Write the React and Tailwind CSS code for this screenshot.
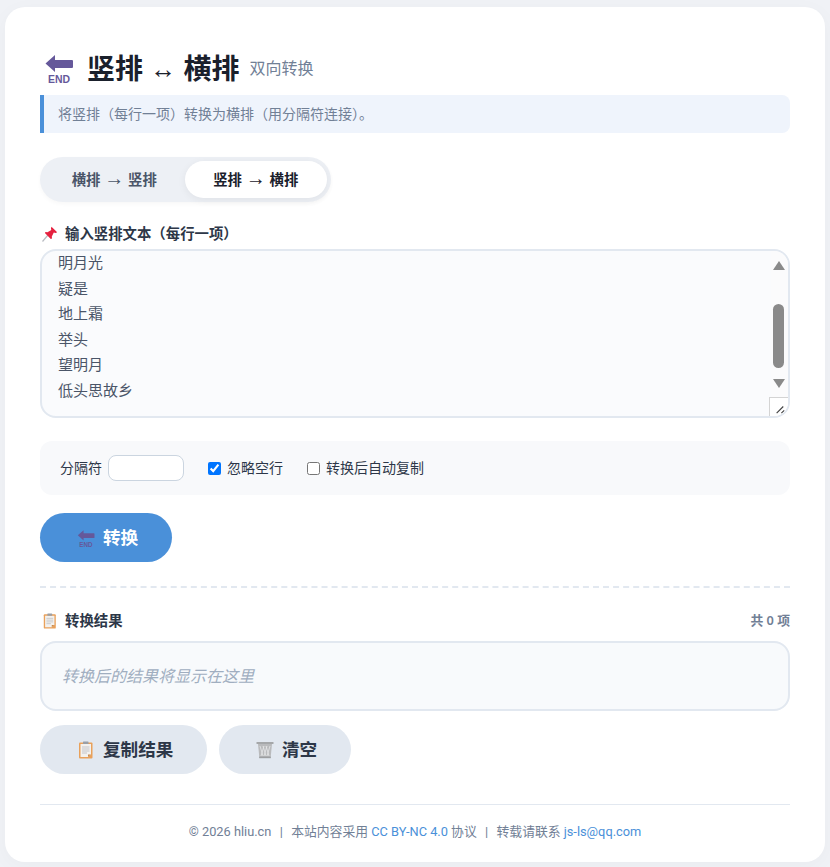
const FONT = "font-['Noto_Sans','Noto_Sans_CJK_SC',sans-serif]"

function EndIcon({ className }) {
  return (
    <svg viewBox="0 -2 28 33" className={className}>
      <path d="M0.5 8.5 L10 0 V5 H27 Q28 5 28 6 V12 Q28 13 27 13 H10 V17 Z" fill="#65589a" />
      <text x="3" y="27.7" fontFamily="Liberation Sans" fontSize="11.5" fontWeight="700" textLength="22" lengthAdjust="spacingAndGlyphs" fill="#65589a">END</text>
    </svg>
  )
}

function PinIcon() {
  return (
    <svg viewBox="0 0 16 16" className="h-4 w-4 shrink-0">
      <path d="M0.5 15.5 L6 9" stroke="#b9bcc2" strokeWidth="1.2" />
      <path d="M9.5 0.8 L15.2 6.3 L13.6 7 L11.8 6.6 L9.8 10.6 L10 12.6 L8.8 13 L2.9 7 L3.5 6 L5.5 6.2 L9.3 4.1 L8.9 2.4 Z" fill="#e5213f" />
    </svg>
  )
}

function ClipboardIcon({ className }) {
  return (
    <svg viewBox="0 0 16 18" className={className}>
      <rect x="1" y="1.5" width="13.5" height="16" rx="1" fill="#e9a15b" />
      <path d="M2.5 3 H13 V13.5 L10 16 H2.5 Z" fill="#f3f1ee" />
      <path d="M10 16 L10 13.5 H13 Z" fill="#c98a4a" />
      <rect x="5" y="0.5" width="5.5" height="2.5" rx="0.5" fill="#9a9fa6" />
      <path d="M4 6 H11.5 M4 8 H11.5 M4 10 H11.5 M4 12 H9" stroke="#bfc1c5" strokeWidth="0.9" />
    </svg>
  )
}

function TrashIcon() {
  return (
    <svg viewBox="0 0 18 18" className="h-[18px] w-[18px] shrink-0">
      <rect x="0.5" y="1" width="17" height="2" fill="#a5a7a9" />
      <path d="M2 3 H16 L14.6 17 H3.4 Z" fill="#b9babc" />
      <path d="M4 5 L7 15 M7 5 L10 15 M10 5 L13 15 M14 5 L11 15 M11 5 L8 15 M8 5 L5 15" stroke="#e6e7e9" strokeWidth="0.8" />
      <rect x="3.2" y="15.6" width="11.6" height="1.6" fill="#9c9ea0" />
    </svg>
  )
}

function Arrow({ children, className }) {
  return <span className={`font-['Liberation_Sans'] leading-[0] font-normal ${className}`}>{children}</span>
}

const lines = ['明月光', '疑是', '地上霜', '举头', '望明月', '低头思故乡']

export default function App() {
  return (
    <main className={`min-h-[867px] bg-[#f0f2f6] px-[5px] pt-[7px] pb-[5px] ${FONT}`}>
      <div className="h-[855px] overflow-hidden rounded-[20px] bg-white px-[35px] pt-[40px] shadow-[0_4px_20px_rgba(0,0,0,0.03)]">
        <div className="flex h-[42px] items-center">
          <EndIcon className="mt-[2px] ml-[5px] mr-[14px] h-[33px] w-7 shrink-0" />
          <h1 className="text-[28px] leading-[42px] font-bold text-[#1a202c]">竖排 <Arrow className="align-[1px] text-[26px]">↔</Arrow> 横排</h1>
          <span className="ml-[10px] text-base text-[#718096]">双向转换</span>
        </div>

        <p className="mt-[6px] flex h-[38px] items-center rounded-r-lg border-l-4 border-[#4a90d9] bg-[#eff4fc] pl-[14px] text-sm text-[#718096]">
          将竖排（每行一项）转换为横排（用分隔符连接）。
        </p>

        <div className="mt-6 flex h-[45px] w-[291px] items-center rounded-full bg-[#edf0f5] p-1 shadow-[0_2px_4px_rgba(0,0,0,0.03)]">
          <button className="h-[37px] w-[141px] text-[14.4px] font-semibold text-[#4a5568]">横排 <Arrow className="text-[20px]">→</Arrow> 竖排</button>
          <button className="h-[37px] w-[143px] rounded-full bg-white text-[14.4px] font-semibold text-[#1a202c] shadow-[0_2px_8px_rgba(0,0,0,0.06)]">竖排 <Arrow className="text-[20px]">→</Arrow> 横排</button>
        </div>

        <div className="mt-[22px] flex h-[20px] items-center gap-[7px] pl-[2px] text-[14.4px] font-semibold text-[#2d3748]">
          <PinIcon />
          <span>输入竖排文本（每行一项）</span>
        </div>

        <div className="relative mt-[5px] h-[169px] overflow-hidden rounded-2xl border-2 border-[#e2e8f0] bg-[#fafbfd]">
          <div className="-mt-[1px] pl-4 text-[15px] leading-[25.5px] text-[#4a5568]">
            {lines.map(line => <div key={line}>{line}</div>)}
          </div>
          <div className="absolute top-0 right-0 bottom-0 w-[17px] bg-[#fbfbfc]">
            <div className="absolute top-[10px] right-[3px] h-0 w-0 border-x-[6.5px] border-b-[9px] border-x-transparent border-b-[#8a8a8a]" />
            <div className="absolute top-[53px] right-[4px] h-[64px] w-[11px] rounded-full bg-[#8a8a8a]" />
            <div className="absolute top-[128px] right-[3px] h-0 w-0 border-x-[6.5px] border-t-[9px] border-x-transparent border-t-[#8a8a8a]" />
          </div>
          <div className="absolute right-0 bottom-0 h-[19px] w-[19px] border-t border-l border-[#d4d4d4] bg-white">
            <svg viewBox="0 0 19 19" className="h-full w-full">
              <path d="M7 16 L14 9 M12 16 L15 13" stroke="#444" strokeWidth="1.2" />
            </svg>
          </div>
        </div>

        <div className="mt-[23px] flex h-[54px] items-center rounded-xl bg-[#f8f9fb] pl-5 text-sm text-[#2d3748]">
          <span>分隔符</span>
          <input className="ml-[6px] h-[26px] w-[76px] rounded-lg border border-[#cbd5e0] bg-white" />
          <label className="ml-6 flex items-center gap-[6px]">
            <input type="checkbox" defaultChecked className="m-0 h-[13px] w-[13px]" />
            <span>忽略空行</span>
          </label>
          <label className="ml-6 flex items-center gap-[6px]">
            <input type="checkbox" className="m-0 h-[13px] w-[13px]" />
            <span>转换后自动复制</span>
          </label>
        </div>

        <button className="mt-[18px] flex h-[49px] w-[132px] items-center gap-2 rounded-full bg-[#4a90d9] pl-[37px] text-[17.6px] font-semibold text-white">
          <EndIcon className="mt-[2px] h-5 w-[18px] shrink-0" />
          <span>转换</span>
        </button>

        <div className="mt-6 border-t-2 border-dashed border-[#e2e8f0]" />

        <div className="mt-[23px] flex h-[20px] items-center justify-between text-[14.4px] font-semibold text-[#2d3748]">
          <div className="flex items-center gap-[7px] pl-[2px]">
            <ClipboardIcon className="h-4 w-4 shrink-0" />
            <span>转换结果</span>
          </div>
          <span className="text-[12.8px] text-[#718096]">共 0 项</span>
        </div>

        <div className="mt-[10px] flex h-[70px] items-center rounded-2xl border-2 border-[#e2e8f0] bg-[#f8fafc] pl-[20px] text-base text-[#a0aec0] italic">
          转换后的结果将显示在这里
        </div>

        <div className="mt-[14px] flex gap-3">
          <button className="flex h-[49px] w-[167px] items-center gap-2 rounded-full bg-[#e2e8f0] pl-[37px] text-[17.6px] font-semibold text-[#2d3748]">
            <ClipboardIcon className="h-[18px] w-[18px] shrink-0" />
            <span>复制结果</span>
          </button>
          <button className="flex h-[49px] w-[132px] items-center gap-2 rounded-full bg-[#e2e8f0] pl-[37px] text-[17.6px] font-semibold text-[#2d3748]">
            <TrashIcon />
            <span>清空</span>
          </button>
        </div>

        <footer className="mt-[30px] border-t border-[#e2e8f0] pt-[18px] text-center font-['Roboto','Noto_Sans_CJK_SC',sans-serif] text-[12.8px] leading-[18px] text-[#718096]">
          © 2026 hliu.cn <span className="px-[2px]">&nbsp;|&nbsp;</span> 本站内容采用 <a className="text-[#4a90d9]">CC BY-NC 4.0</a> 协议 <span className="px-[2px]">&nbsp;|&nbsp;</span> 转载请联系 <a className="text-[#4a90d9]">js-ls@qq.com</a>
        </footer>
      </div>
    </main>
  )
}
